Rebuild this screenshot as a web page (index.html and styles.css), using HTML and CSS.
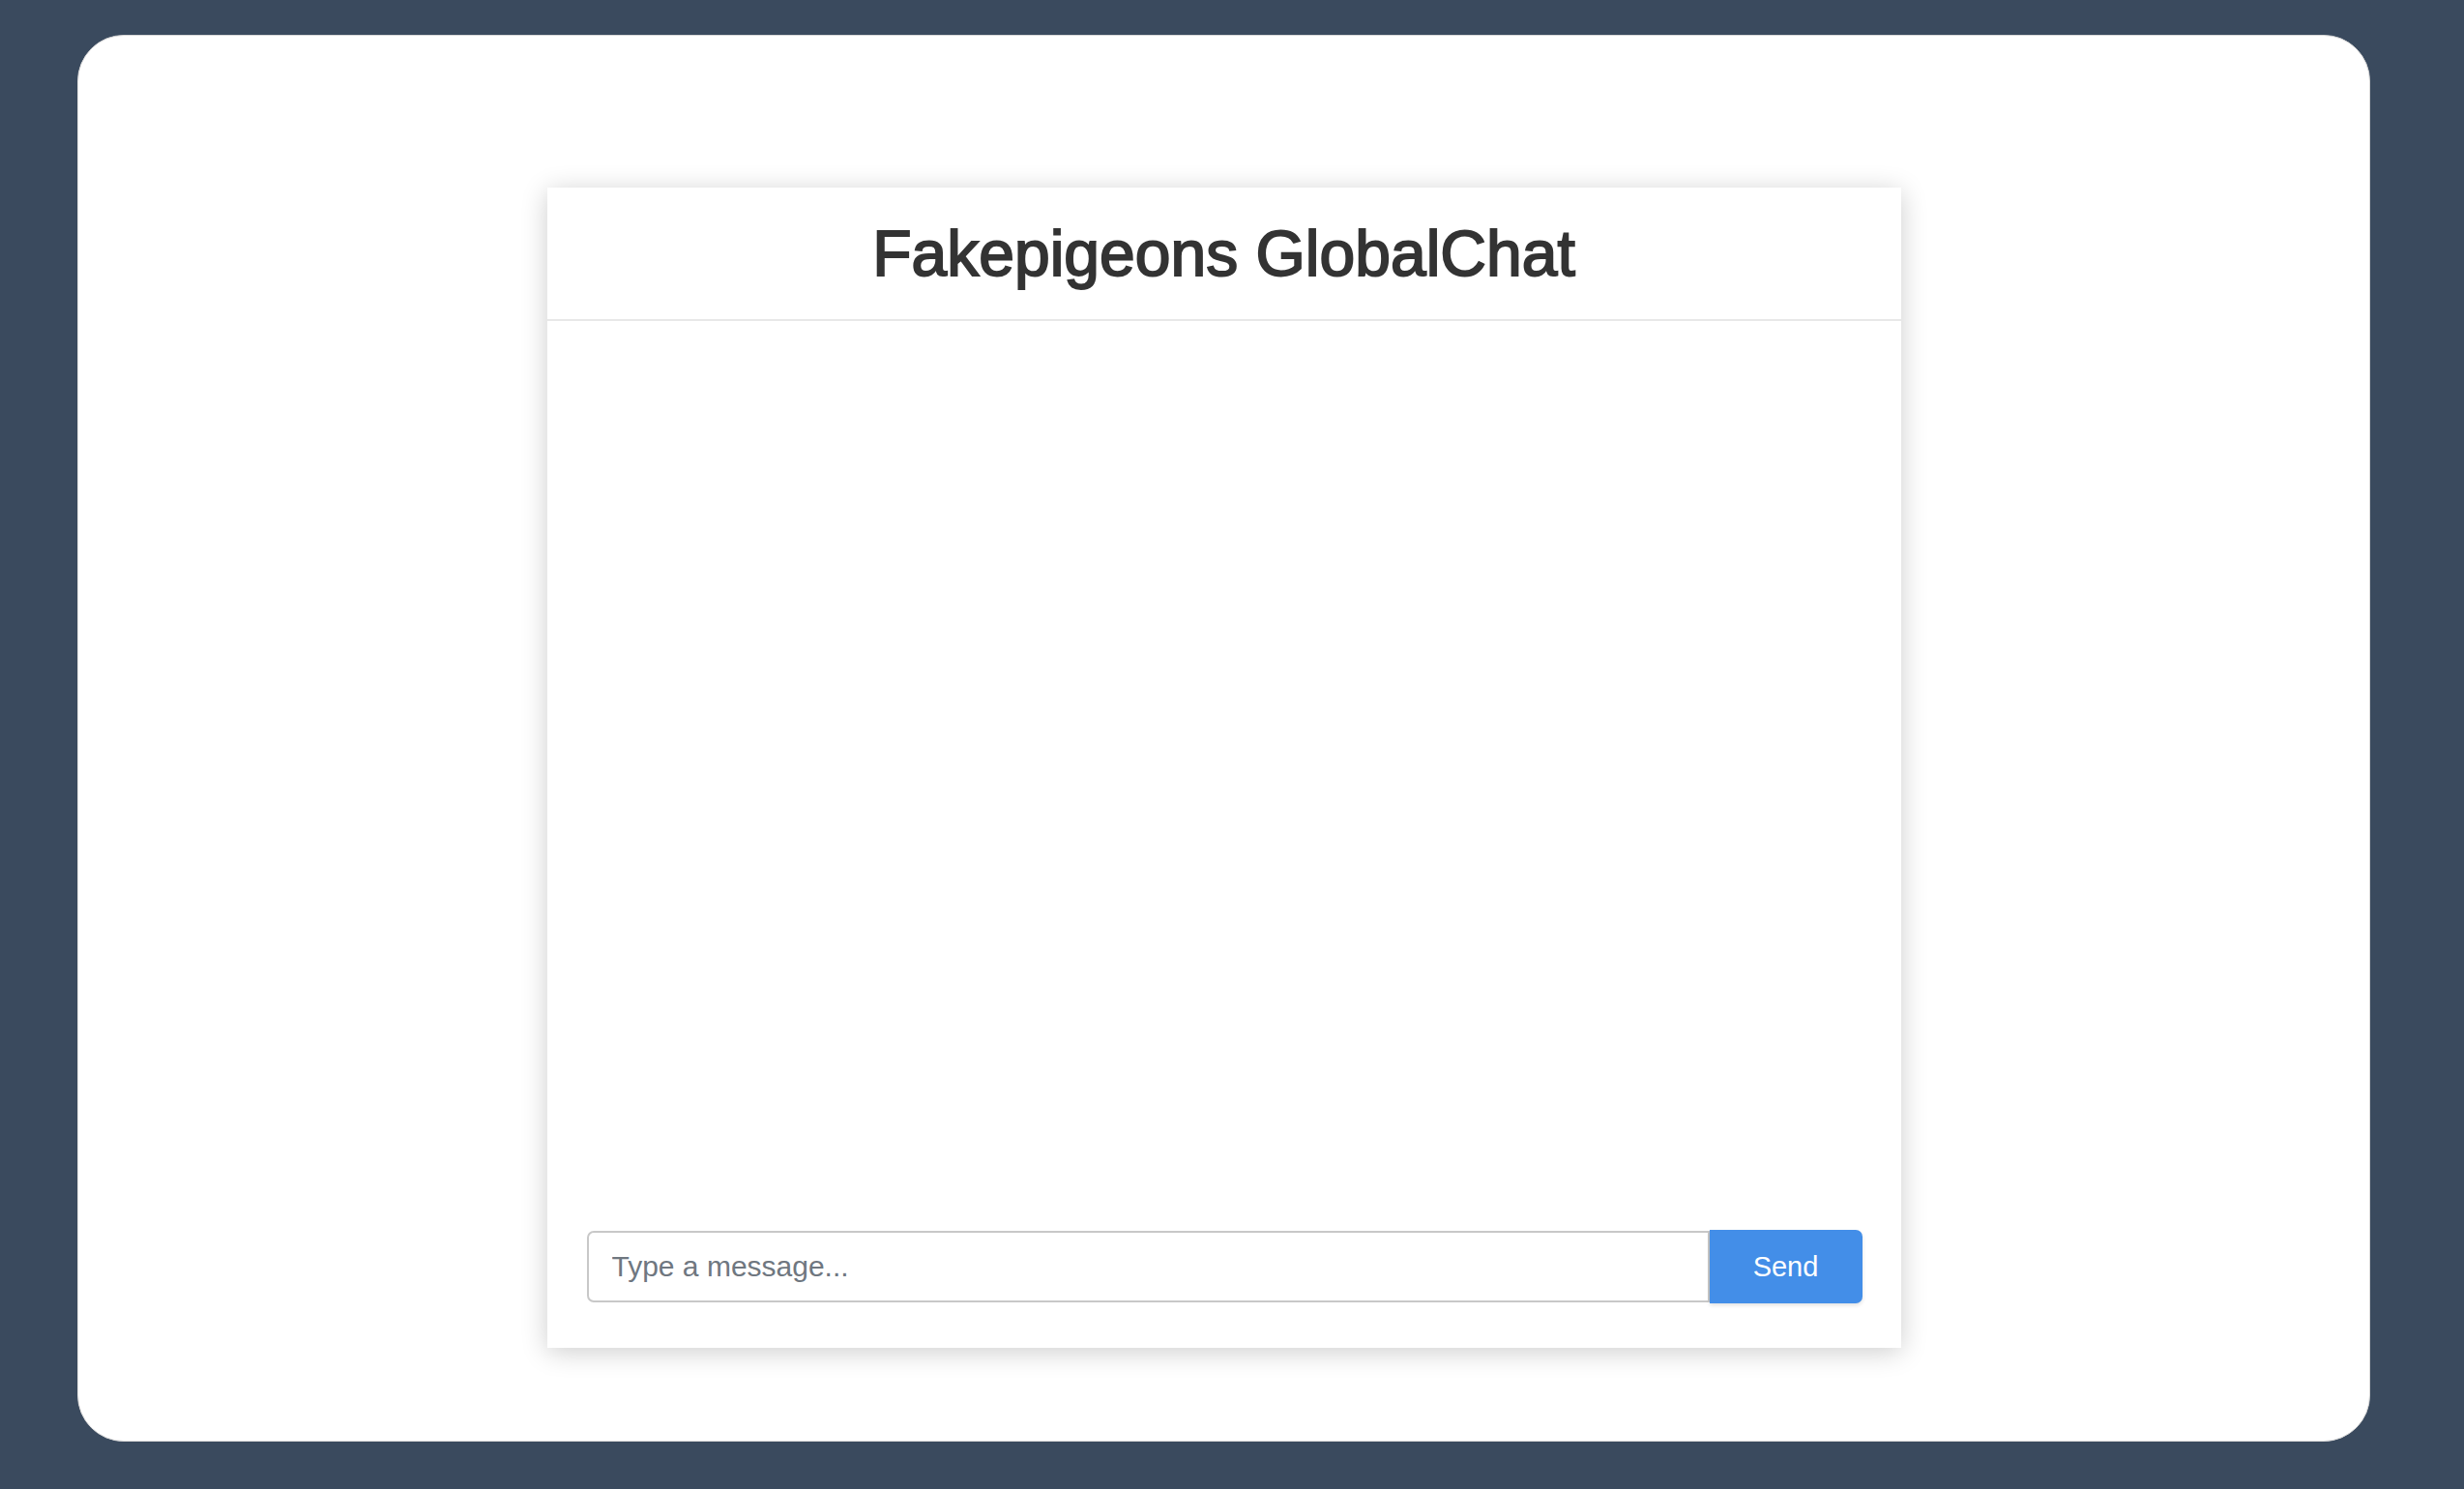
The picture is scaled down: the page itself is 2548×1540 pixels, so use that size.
FILE: index.html
```html
<!DOCTYPE html>
<html>
<head>
<meta charset="utf-8">
<title>Fakepigeons GlobalChat</title>
<link rel="stylesheet" href="styles.css">
</head>
<body>
<div class="frame">
  <div class="chat">
    <div class="chat-header">
      <h1 class="chat-title">Fakepigeons GlobalChat</h1>
    </div>
    <div class="messages"></div>
    <form class="composer">
      <input class="msg-input" type="text" placeholder="Type a message...">
      <button class="send-btn" type="button">Send</button>
    </form>
  </div>
</div>
</body>
</html>
```

FILE: styles.css
```css
html, body {
  margin: 0;
  padding: 0;
}
body {
  background: #3a4a5e;
  width: 2548px;
  height: 1540px;
  overflow: hidden;
  font-family: "Liberation Sans", Arial, sans-serif;
  padding-top: 36px;
  box-sizing: border-box;
}
.frame {
  box-sizing: border-box;
  margin-left: 80px;
  width: 2371px;
  height: 1455px;
  background: #fff;
  border-radius: 48px;
  border: 1px solid #d8d8d8;
  padding-top: 157px;
}
.chat {
  width: 1400px;
  height: 1200px;
  margin: 0 auto;
  background: #fff;
  box-shadow: 0 4px 26px rgba(0, 0, 0, 0.2);
  display: flex;
  flex-direction: column;
}
.chat-header {
  height: 136px;
  border-bottom: 2px solid #e8e8e8;
  display: flex;
  align-items: center;
  justify-content: center;
}
.chat-title {
  margin: 0;
  font-size: 66px;
  font-weight: normal;
  color: #333;
  -webkit-text-stroke: 1.9px #333;
}
.messages {
  flex: 1;
}
.composer {
  display: flex;
  margin: 0;
  padding: 0 40px 46px 41px;
}
.msg-input {
  flex: 1;
  height: 74px;
  box-sizing: border-box;
  border: 2px solid #c8c8c8;
  border-radius: 7px 0 0 7px;
  padding: 0 24px;
  font-family: "Liberation Sans", Arial, sans-serif;
  font-size: 30px;
  color: #333;
  outline: none;
}
.msg-input::placeholder {
  color: #6f7780;
}
.send-btn {
  width: 158px;
  height: 76px;
  margin-top: -1px;
  border: none;
  border-radius: 0 7px 7px 0;
  background: #438ee8;
  color: #fff;
  font-family: "Liberation Sans", Arial, sans-serif;
  font-size: 29px;
  box-shadow: 0 2px 4px rgba(0, 0, 0, 0.12);
}
```
